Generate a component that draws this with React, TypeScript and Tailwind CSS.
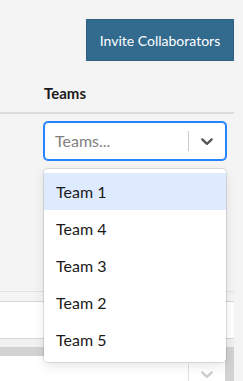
const teams = ['Team 1', 'Team 4', 'Team 3', 'Team 2', 'Team 5'];

function Chevron({ light }: { light?: boolean }) {
  return (
    <svg viewBox="0 0 20 20" className={`h-5 w-5 ${light ? 'fill-[#cccccc]' : 'fill-[#555555]'}`}>
      <path d="M4.516 7.548c0.436-0.446 1.043-0.481 1.576 0l3.908 3.747 3.908-3.747c0.533-0.481 1.141-0.446 1.574 0 0.436 0.445 0.408 1.197 0 1.615-0.406 0.418-4.695 4.502-4.695 4.502-0.217 0.223-0.502 0.335-0.787 0.335s-0.57-0.112-0.789-0.335c0 0-4.287-4.084-4.695-4.502s-0.436-1.17 0-1.615z" />
    </svg>
  );
}

export default function App() {
  return (
    <div className="relative h-[381px] w-[243px] overflow-hidden bg-[#f4f4f4] font-['Lato','Noto_Sans',sans-serif] text-[#1a1a1a]">
      <div className="flex w-[234px] flex-col">
        {/* header with action */}
        <div className="flex justify-end pt-[19px]">
          <button className="flex h-[42px] w-[148px] items-center justify-center border border-[#2c5f80] bg-[#336b8f] text-[14px] text-white">
            Invite Collaborators
          </button>
        </div>

        <div className="pl-[44px] pt-[23px] pb-[10px] text-[15px] font-bold leading-[18px]">Teams</div>
        <div className="h-[2px] bg-[#dcdcdc]" />

        {/* teams select, focused */}
        <div className="pl-[44px] pt-[8px]">
          <div className="flex h-[38px] w-[182px] items-center rounded-[4px] border border-[#2684ff] bg-white shadow-[0_0_0_1px_#2684ff]">
            <div className="flex-1 pl-[10px] text-[16px] text-[#808080]">Teams...</div>
            <span className="h-[20px] w-px bg-[#cccccc]" />
            <div className="flex w-[36px] justify-center">
              <Chevron />
            </div>
          </div>
        </div>

        {/* rows behind the open menu */}
        <div className="mt-[131px] h-px bg-[#e2e2e2]" />
        <div className="h-[9px]" />
        <div className="h-px bg-[#d6d6d6]" />
        <div className="h-[36px] bg-white" />
        <div className="h-px bg-[#d6d6d6]" />
        <div className="h-[8px] bg-[#f0f0f0]" />
        <div className="flex h-[40px] flex-col bg-[#d2d2d2] pt-[9px] pr-[9px]">
          <div className="flex flex-1 items-start bg-white pt-[8px]">
            <div className="flex-1" />
            <span className="h-[20px] w-px bg-[#e0e0e0]" />
            <div className="flex w-[36px] justify-center">
              <Chevron light />
            </div>
          </div>
        </div>
      </div>

      {/* open menu */}
      <div className="absolute left-[44px] top-[169px] w-[182px] rounded-[4px] bg-white py-[4px] shadow-[0_0_0_1px_rgba(0,0,0,0.1),0_4px_11px_rgba(0,0,0,0.1)]">
        {teams.map((t, i) => (
          <div
            key={t}
            className={`flex h-[37px] items-center px-[12px] text-[16px] ${i === 0 ? 'bg-[#deebff]' : ''}`}
          >
            {t}
          </div>
        ))}
      </div>
    </div>
  );
}
